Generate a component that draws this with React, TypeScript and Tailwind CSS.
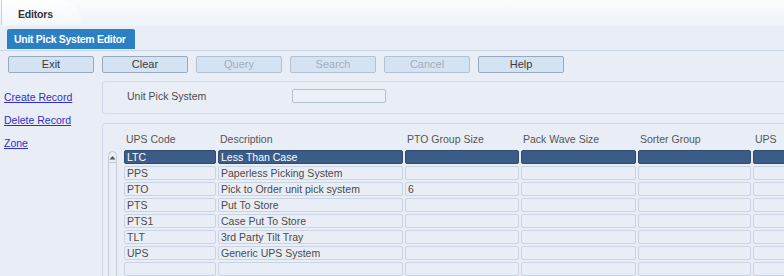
import React from "react";

const buttons = [
    { label: "Exit", enabled: true },
    { label: "Clear", enabled: true },
    { label: "Query", enabled: false },
    { label: "Search", enabled: false },
    { label: "Cancel", enabled: false },
    { label: "Help", enabled: true },
];

const columns = [
    { title: "UPS Code", w: "w-[92px]" },
    { title: "Description", w: "w-[185px]" },
    { title: "PTO Group Size", w: "w-[114px]" },
    { title: "Pack Wave Size", w: "w-[115px]" },
    { title: "Sorter Group", w: "w-[113px]" },
    { title: "UPS", w: "w-[60px]" },
];

const rows = [
    ["LTC", "Less Than Case", "", "", "", ""],
    ["PPS", "Paperless Picking System", "", "", "", ""],
    ["PTO", "Pick to Order unit pick system", "6", "", "", ""],
    ["PTS", "Put To Store", "", "", "", ""],
    ["PTS1", "Case Put To Store", "", "", "", ""],
    ["TLT", "3rd Party Tilt Tray", "", "", "", ""],
    ["UPS", "Generic UPS System", "", "", "", ""],
    ["", "", "", "", "", ""],
];

export default function App() {
    return (
        <div className="w-[784px] h-[276px] overflow-hidden bg-[#e9eef6] font-['Liberation_Sans',Arial,sans-serif] text-[10.5px] text-[#4a4a4a]">
            {/* top tab strip */}
            <div className="h-[26px] flex bg-gradient-to-b from-[#fbfcfe] to-[#eef3f9]">
                <div className="ml-[1px] w-[80px] h-[25px] bg-gradient-to-b from-white to-[#f3f6fb] border-l border-[#bcd3ee] rounded-tr-[22px] pl-[16px] pt-[7px] font-bold text-[10.5px] tracking-[-0.2px] text-[#333]">
                    Editors
                </div>
            </div>

            {/* editor tab */}
            <div className="h-[25px] pt-[3px] pl-[7px] border-b border-[#c8d6e8]">
                <div className="w-[128px] h-[20px] bg-[#2a7fc5] rounded-t-[2px] pl-[7px] leading-[20px] text-white font-bold text-[10.5px] tracking-[-0.3px] whitespace-nowrap">
                    Unit Pick System Editor
                </div>
            </div>

            {/* buttons */}
            <div className="mt-[5px] pl-[8px] flex gap-[8px]">
                {buttons.map((b) => (
                    <div
                        key={b.label}
                        className={`w-[86px] h-[17px] rounded-[2px] border bg-[#d4e3f4] flex items-center justify-center text-[11px] leading-[15px] ${b.enabled ? "border-[#98a8bd] text-[#3a3a3a]" : "border-[#b3c0d0] text-[#a3adba]"}`}
                    >
                        {b.label}
                    </div>
                ))}
            </div>

            {/* body */}
            <div className="mt-[8px] flex">
                <div className="w-[102px] shrink-0 pl-[4px] pt-[10px] flex flex-col gap-[10px] leading-[13px] text-[10.5px]">
                    <a className="underline text-[#2f2fc8]">Create Record</a>
                    <a className="underline text-[#2f2fc8]">Delete Record</a>
                    <a className="underline text-[#2f2fc8]">Zone</a>
                </div>

                <div className="flex-1 flex flex-col">
                    <div className="w-[700px] h-[33px] border border-[#cfdbea] rounded-[3px] flex items-start pt-[7px]">
                        <div className="w-[189px] pl-[24px] leading-[14px]">Unit Pick System</div>
                        <div className="w-[94px] h-[14px] border border-[#b5c0cd] rounded-[2px] bg-[#edf1f7]"></div>
                    </div>

                    <div className="mt-[9px] w-[700px] h-[160px] border border-[#cfdbea] rounded-[3px] flex pl-[5px]">
                        {/* scrollbar */}
                        <div className="w-[11px] mt-[27px] flex flex-col">
                            <div className="h-[12px] border border-[#c2ccd9] rounded-t-[6px] flex items-center justify-center">
                                <svg width="7" height="5" viewBox="0 0 7 5">
                                    <path d="M0.5 4.5 L3.5 1 L6.5 4.5 Z" fill="#555" />
                                </svg>
                            </div>
                            <div className="flex-1 border-x border-[#c2ccd9]"></div>
                        </div>

                        <div className="ml-[7px] flex flex-col">
                            <div className="h-[26px] pt-[9px] flex gap-[2px] leading-[13px] text-[#555]">
                                {columns.map((c) => (
                                    <div key={c.title} className={`${c.w} pl-[2px] shrink-0`}>
                                        {c.title}
                                    </div>
                                ))}
                            </div>
                            <div className="flex flex-col gap-[2px]">
                                {rows.map((r, i) => (
                                    <div key={i} className="flex gap-[2px]">
                                        {r.map((v, j) => (
                                            <div
                                                key={j}
                                                className={`${columns[j].w} shrink-0 h-[14px] rounded-[2px] border pl-[2px] leading-[12px] whitespace-nowrap overflow-hidden ${i === 0 ? "bg-[#3c5c88] border-[#2e4b73] text-white" : "bg-[#e9eef6] border-[#c8d4e4]"}`}
                                            >
                                                {v}
                                            </div>
                                        ))}
                                    </div>
                                ))}
                            </div>
                        </div>
                    </div>
                </div>
            </div>
        </div>
    );
}
